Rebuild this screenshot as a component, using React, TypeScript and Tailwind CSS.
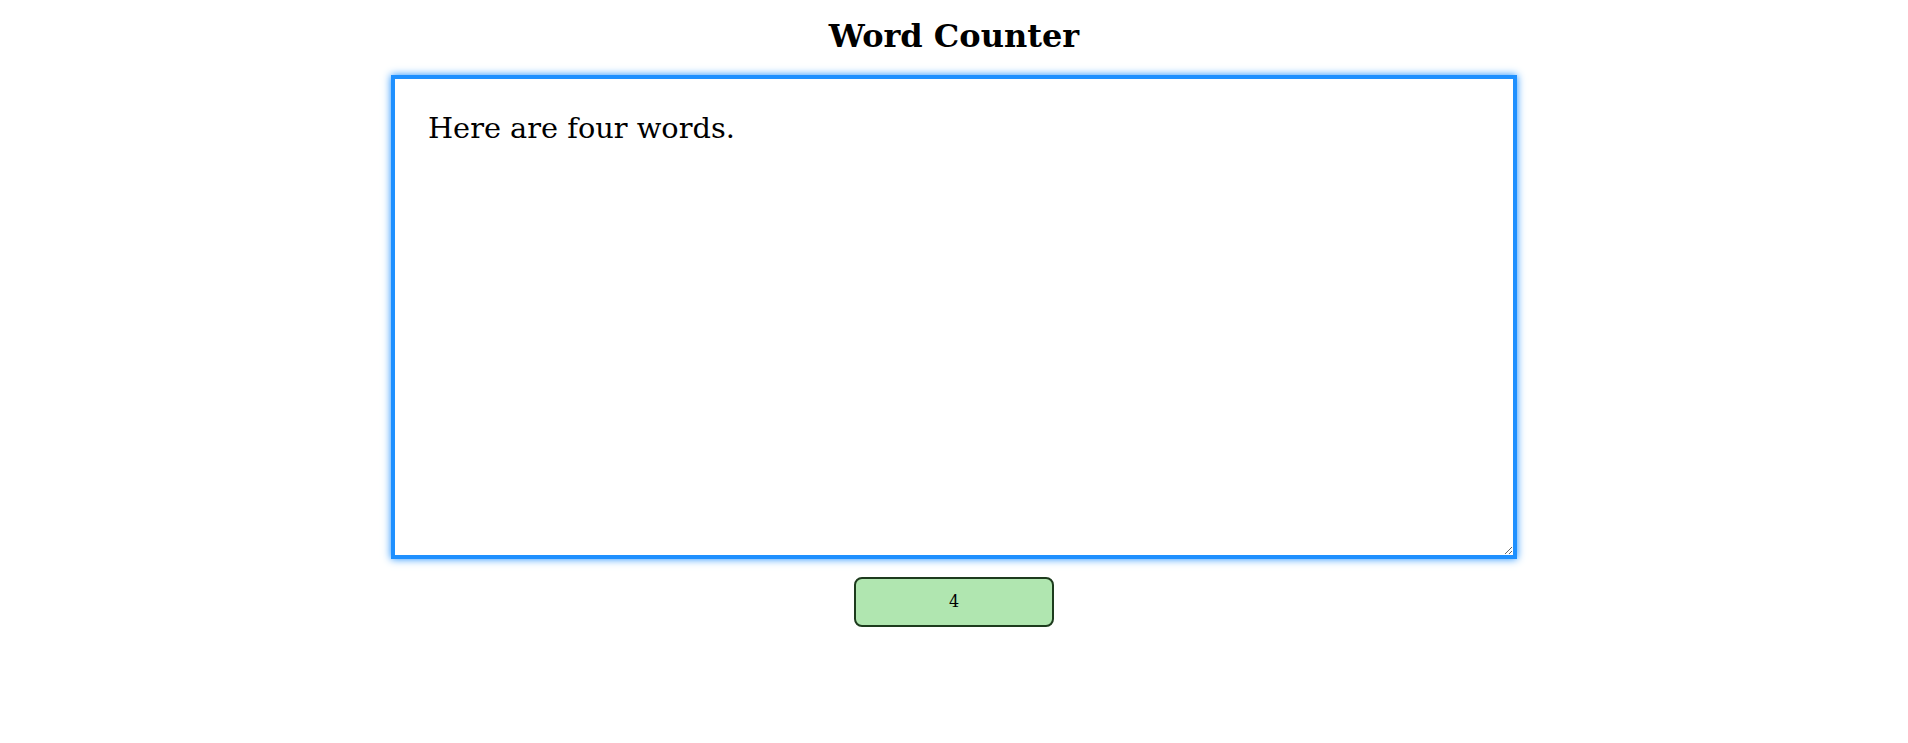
import React, { useState } from "react";

const App: React.FC = () => {
  const [text, setText] = useState<string>("Here are four words.");

  const count = text.trim() === "" ? 0 : text.trim().split(/\s+/).length;

  return (
    <div className="flex flex-col items-center min-h-screen bg-white pt-[17px] font-['DejaVu_Serif',serif] text-black">
      <h1 className="text-[32px] font-bold leading-[normal] mb-[20px]">
        Word Counter
      </h1>
      <textarea
        value={text}
        onChange={(e) => setText(e.target.value)}
        className="w-[1126px] h-[484px] pt-[32px] pl-[33px] pr-8 pb-8 border-4 border-[#1e90ff] shadow-[0_0_8px_#1e90ff] outline-none text-[28.8px] leading-[normal] font-['DejaVu_Serif',serif] bg-white"
      />
      <div className="mt-[18px] w-[200px] h-[50px] flex items-center justify-center bg-[#b0e6b0] border-2 border-[#1d3b1d] rounded-lg text-[16px]">
        {count}
      </div>
    </div>
  );
};

export default App;
